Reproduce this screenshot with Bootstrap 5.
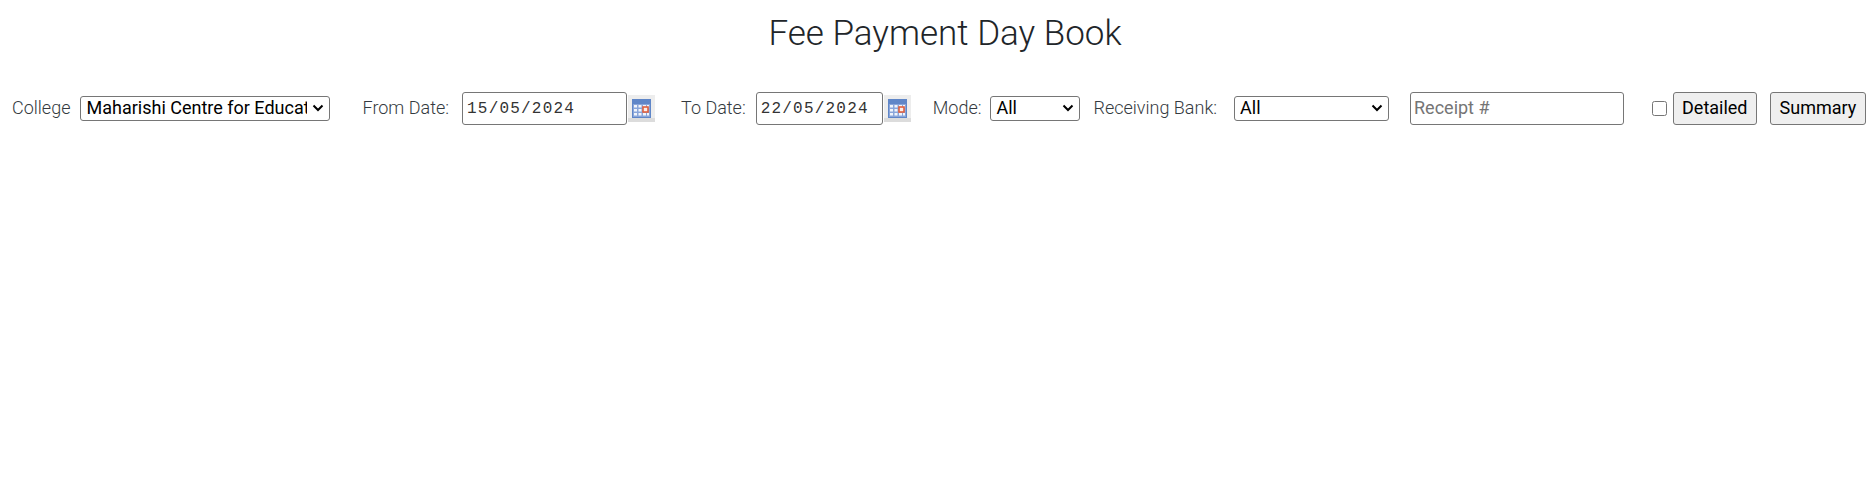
<!DOCTYPE html>
<html lang="en">
<head>
  <meta charset="UTF-8" />
  <title>Fee Payment Day Book</title>
  <link href="https://cdn.jsdelivr.net/npm/bootstrap@5.3.3/dist/css/bootstrap.min.css" rel="stylesheet" />
  <style>
    html, body { height: 487px; overflow: hidden; }
    body { font-family: Roboto, sans-serif; font-weight: 300; color: #212529; background: #fff; }
    .page-title { font-family: Roboto, sans-serif; font-weight: 300; font-size: 35px; line-height: 42px; margin: 13px 0 0; padding-left: 20px; }
    .filter-bar { height: 34px; margin-top: 36px; padding-left: 12px; font-size: 18px; color: #343a40; }
    .filter-bar label { white-space: nowrap; flex: none; margin-bottom: 2px; }
    .filter-bar select, .filter-bar input[type=text], .filter-bar button { font-family: Roboto, sans-serif; font-weight: 400; font-size: 18px; color: #000; flex: none; }
    .filter-bar select {
      appearance: none; height: 25px; padding: 0 22px 1px 5px; line-height: 22px; border: 1px solid #767676; border-radius: 3px;
      background: #fff url("data:image/svg+xml,%3Csvg xmlns='http://www.w3.org/2000/svg' viewBox='0 0 12 8'%3E%3Cpath d='M1.5 1.5 6 6l4.500-4.500' fill='none' stroke='%23000' stroke-width='2'/%3E%3C/svg%3E") no-repeat right 5px center / 12px 8px;
    }
    .filter-bar input[type=text] { height: 33px; padding: 0 3px 2px; border: 1px solid #767676; border-radius: 3px; }
    .filter-bar input::placeholder { color: #757575; }
    .filter-bar input.date-box { width: 165px; padding: 1px 4px 0; font-family: "Liberation Mono", monospace; font-size: 16px; letter-spacing: 1.2px; color: #333; }
    .filter-bar input.date-box-to { width: 127px; }
    .sel-college { width: 250px; margin-left: 10px; }
    .sel-mode { width: 90px; margin-left: 9px; }
    .sel-bank { width: 155px; margin-left: 17px; }
    .cal-btn { width: 27px; height: 27px; margin-left: 1px; flex: none; }
    .receipt-box { width: 214px; margin-left: 21px; }
    .filter-bar button { height: 33px; padding: 0 8px 1px; background: #efefef; border: 1px solid #767676; border-radius: 3px; }
    .filter-bar button.btn-summary { margin-left: 13px; padding: 0 9px 1px; }
    .detail-check { width: 15px; height: 15px; margin: 0 6px 0 28px; flex: none; }
    .lbl-from { margin-left: 32px; margin-right: 13px; }
    .lbl-to { margin-left: 26px; margin-right: 10px; }
    .lbl-mode { margin-left: 22px; }
    .lbl-bank { margin-left: 13px; }
  </style>
</head>
<body>
  <h1 class="page-title text-center">Fee Payment Day Book</h1>

  <form class="filter-bar d-flex align-items-center">
    <label>College</label>
    <select class="sel-college"><option>Maharishi Centre for Educational Excellence</option></select>

    <label class="lbl-from">From Date:</label>
    <input type="text" class="date-box" value="15/05/2024" />
    <svg class="cal-btn" viewBox="0 0 27 27">
      <rect width="27" height="27" fill="#ededed" />
      <rect y="23" width="27" height="4" fill="#dcdcdc" />
      <rect x="4" y="4" width="19" height="19" fill="#5f86c8" />
      <rect x="5" y="9" width="17" height="13" fill="#8aa6da" />
      <path d="M6 10h3v2.500h-3zM10.500 10h3v2.500h-3zM15 10h3v2.500h-3zM6 14h3v2.500h-3zM10.500 14h3v2.500h-3zM6 18h3v2.500h-3zM10.500 18h3v2.500h-3zM15 18h3v2.500h-3zM19 10h2v2.500h-2zM19 18h2v2.500h-2z" fill="#f1f5fb" />
      <rect x="15" y="12" width="5" height="5" fill="#fbeee8" stroke="#e0603e" stroke-width="1.600" />
    </svg>

    <label class="lbl-to">To Date:</label>
    <input type="text" class="date-box date-box-to" value="22/05/2024" />
    <svg class="cal-btn" viewBox="0 0 27 27">
      <rect width="27" height="27" fill="#ededed" />
      <rect y="23" width="27" height="4" fill="#dcdcdc" />
      <rect x="4" y="4" width="19" height="19" fill="#5f86c8" />
      <rect x="5" y="9" width="17" height="13" fill="#8aa6da" />
      <path d="M6 10h3v2.500h-3zM10.500 10h3v2.500h-3zM15 10h3v2.500h-3zM6 14h3v2.500h-3zM10.500 14h3v2.500h-3zM6 18h3v2.500h-3zM10.500 18h3v2.500h-3zM15 18h3v2.500h-3zM19 10h2v2.500h-2zM19 18h2v2.500h-2z" fill="#f1f5fb" />
      <rect x="15" y="12" width="5" height="5" fill="#fbeee8" stroke="#e0603e" stroke-width="1.600" />
    </svg>

    <label class="lbl-mode">Mode:</label>
    <select class="sel-mode"><option>All</option></select>

    <label class="lbl-bank">Receiving Bank:</label>
    <select class="sel-bank"><option>All</option></select>

    <input type="text" class="receipt-box" placeholder="Receipt #" />

    <input type="checkbox" class="detail-check" />
    <button type="button">Detailed</button>
    <button type="button" class="btn-summary">Summary</button>
  </form>
</body>
</html>
